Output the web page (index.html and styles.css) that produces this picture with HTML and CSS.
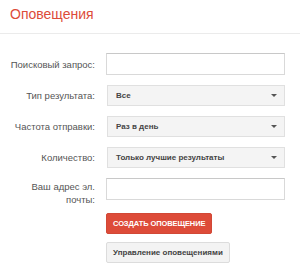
FILE: index.html
```html
<!DOCTYPE html>
<html lang="ru">
<head>
  <meta charset="UTF-8" />
  <title>Оповещения</title>
  <link rel="stylesheet" href="styles.css">
</head>
<body>
  <header class="top">
    <h1>Оповещения</h1>
  </header>

  <form class="alert-form">
    <label class="lbl">Поисковый запрос:</label>
    <input type="text" class="field" />

    <label class="lbl">Тип результата:</label>
    <div class="select"><span>Все</span><i class="caret"></i></div>

    <label class="lbl">Частота отправки:</label>
    <div class="select"><span>Раз в день</span><i class="caret"></i></div>

    <label class="lbl">Количество:</label>
    <div class="select"><span>Только лучшие результаты</span><i class="caret"></i></div>

    <label class="lbl lbl-top">Ваш адрес эл.<br>почты:</label>
    <input type="text" class="field" />

    <div></div>
    <div class="actions">
      <button type="button" class="btn btn-red">Создать оповещение</button>
      <button type="button" class="btn btn-grey">Управление оповещениями</button>
    </div>
  </form>
</body>
</html>
```

FILE: styles.css
```css
body { font-family: "Liberation Sans", Arial, sans-serif; margin: 0; background: #fff; color: #555; }
.top { border-bottom: 1px solid #ebebeb; padding: 6px 10px 0; height: 27px; }
.top h1 { margin: 0; font-size: 14px; font-weight: normal; color: #dd4b39; line-height: 17px; }
.alert-form { display: grid; grid-template-columns: 95px 179px; column-gap: 11px; row-gap: 10px; padding-top: 19px; }
.lbl { font-size: 9.5px; text-align: right; align-self: center; color: #555; }
.lbl-top { align-self: start; line-height: 13px; padding-top: 2px; }
.field { box-sizing: border-box; height: 22px; width: 179px; margin: 0; border: 1px solid #d9d9d9; border-top-color: #c8c8c8; background: #fff; }
.select { box-sizing: border-box; height: 21px; margin-left: 1px; display: flex; align-items: center; justify-content: space-between; padding: 0 7px 0 8px; border: 1px solid #e0e0e0; background: #f4f4f4; font-size: 8px; font-weight: bold; color: #444; }
.caret { width: 0; height: 0; border-left: 3px solid transparent; border-right: 3px solid transparent; border-top: 3px solid #555; }
.actions { display: flex; flex-direction: column; align-items: flex-start; gap: 8px; margin-top: -3px; }
.btn { box-sizing: border-box; height: 21px; padding: 0 6px; font-family: inherit; font-size: 8px; font-weight: bold; border-radius: 2px; white-space: nowrap; cursor: pointer; }
.btn-red { background: #dd4b39; border: 1px solid #d14836; color: #fff; text-transform: uppercase; font-size: 7.5px; letter-spacing: -0.1px; }
.btn-grey { background: #f3f3f3; border: 1px solid #dcdcdc; color: #444; }
```
